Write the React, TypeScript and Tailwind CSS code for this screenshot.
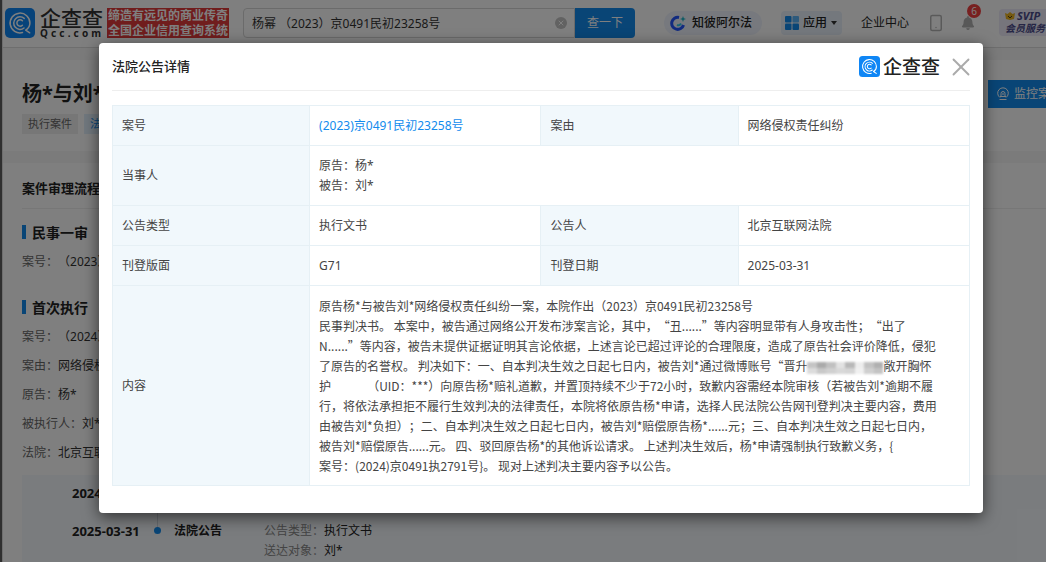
import { ReactNode, useState } from 'react';
import { FaBell } from 'react-icons/fa';
import { Smartphone, X } from 'lucide-react';

const judgment: ReactNode[] = [
  '原告杨*与被告刘*网络侵权责任纠纷一案，本院作出（2023）京0491民初23258号',
  '民事判决书。 本案中，被告通过网络公开发布涉案言论，其中，“丑......”等内容明显带有人身攻击性；“出了',
  'N......”等内容，被告未提供证据证明其言论依据，上述言论已超过评论的合理限度，造成了原告社会评价降低，侵犯',
  <>了原告的名誉权。 判决如下：一、自本判决生效之日起七日内，被告刘*通过微博账号“晋升<Mosaic />敞开胸怀</>,
  <>护<span className="inline-block w-9" />（UID：***）向原告杨*赔礼道歉，并置顶持续不少于72小时，致歉内容需经本院审核（若被告刘*逾期不履</>,
  '行，将依法承担拒不履行生效判决的法律责任，本院将依原告杨*申请，选择人民法院公告网刊登判决主要内容，费用',
  '由被告刘*负担）；二、自本判决生效之日起七日内，被告刘*赔偿原告杨*......元；三、自本判决生效之日起七日内，',
  '被告刘*赔偿原告......元。 四、驳回原告杨*的其他诉讼请求。 上述判决生效后，杨*申请强制执行致歉义务，{',
  '案号：(2024)京0491执2791号}。 现对上述判决主要内容予以公告。',
];

const execution = [
  ['案号：', '（2024）京0491执2791号'],
  ['案由：', '网络侵权责任纠纷'],
  ['原告：', '杨*'],
  ['被执行人：', '刘*'],
  ['法院：', '北京互联网法院'],
];

function Mosaic() {
  return (
    <span className="inline-grid grid-cols-8 w-[76px] h-3 align-middle overflow-hidden blur-[1px]">
      <i className="bg-[#c4c4c4]" /><i className="bg-[#aaaaaa]" /><i className="bg-[#c0c0c0]" /><i className="bg-[#e2e2e2]" />
      <i className="bg-[#b8b8b8]" /><i className="bg-[#ededed]" /><i className="bg-[#c2c2c2]" /><i className="bg-[#b0b0b0]" />
      <i className="bg-[#dcdcdc]" /><i className="bg-[#c8c8c8]" /><i className="bg-[#d0d0d0]" /><i className="bg-[#d8d8d8]" />
      <i className="bg-[#d5d5d5]" /><i className="bg-[#f0f0f0]" /><i className="bg-[#cfcfcf]" /><i className="bg-[#c3c3c3]" />
    </span>
  );
}

function Logo({ className }: { className: string }) {
  return (
    <svg viewBox="0 0 30 30" className={className} fill="none" stroke="white" strokeLinecap="round">
      <rect width="30" height="30" rx="5" fill="#0f86f5" stroke="none" />
      <path d="M17.5 24.600A9.900 9.900 0 1 1 24.900 15c0 3.600-1.600 5.600-4.200 7.200l4 2.600" strokeWidth="1.500" strokeLinejoin="round" />
      <path d="M19 20A6.300 6.300 0 1 1 19.200 10.400" strokeWidth="1.500" />
      <path d="M17.400 17.300A3.200 3.200 0 1 1 17.400 12.800" strokeWidth="1.500" />
    </svg>
  );
}

function Header() {
  const [query, setQuery] = useState('杨幂 （2023）京0491民初23258号');

  return (
    <header className="flex items-center h-12 pl-0.5 pb-0.5 bg-white border-b border-[#dddddd] whitespace-nowrap">
      <a href="#" className="flex items-center shrink-0">
        <Logo className="size-[30px]" />
        <span className="flex flex-col ml-[5px] text-[#333]">
          <span className="text-[21px] leading-5 font-medium">企查查</span>
          <span className="flex justify-between w-[61px] text-[10px] leading-[10px] font-bold">
            <span>Q</span><span>c</span><span>c</span><span>.</span><span>c</span><span>o</span><span>m</span>
          </span>
        </span>
        <span className="ml-1 px-px w-[122px] bg-[#e03a3a] text-white text-[12px] leading-[15px] font-bold text-center">
          缔造有远见的商业传奇<br />全国企业信用查询系统
        </span>
      </a>

      {/* Search */}
      <form className="flex shrink-0 ml-3.5 w-[392px] h-[30px]" onSubmit={e => e.preventDefault()}>
        <div className="relative flex-1">
          <input
            type="text"
            aria-label="搜索"
            value={query}
            onChange={e => setQuery(e.target.value)}
            className="w-full h-full border border-[#d6d6d6] rounded-l-sm pl-2 pr-8 text-[12px] text-[#333] bg-white outline-none"
          />
          <button type="button" aria-label="清空" onClick={() => setQuery('')}
            className="absolute right-2 top-[9px] flex items-center justify-center size-3 rounded-full bg-[#c4c4c4] text-white">
            <X size={8} strokeWidth={3} />
          </button>
        </div>
        <button className="w-[60px] rounded-r-sm bg-[#128bed] text-white text-[12px]">查一下</button>
      </form>

      {/* Navigation */}
      <nav className="flex items-center shrink-0 ml-[29px] text-[12px] text-[#222]">
        <a href="#" className="flex items-center gap-1.5 w-[98px] h-6 pl-1.5 rounded-full bg-[#eef3fc] font-medium">
          <svg viewBox="0 0 16 16" className="size-4" fill="none">
            <path d="M13.500 10A6 6 0 1 1 9 2.500" stroke="#2456ff" strokeWidth="3" />
            <path d="M11 8.500A3 3 0 0 1 7 10" stroke="#35c8e8" strokeWidth="2" />
            <path d="M13 1l.8 2.200L16 4l-2.200.8L13 7l-.8-2.200L10 4l2.200-.8z" fill="#19b5c8" />
          </svg>
          知彼阿尔法
        </a>
        <button className="flex items-center gap-1 ml-[19px] w-[61px] h-6 pl-1 rounded-sm bg-[#e8f1fb] font-medium">
          <svg viewBox="0 0 14 14" className="size-3.5">
            <rect width="6.500" height="6.500" rx="1" fill="#128bed" />
            <rect x="7.500" width="6.500" height="6.500" rx="1" fill="#5cb5f8" />
            <rect y="7.500" width="6.500" height="6.500" rx="1" fill="#128bed" />
            <rect x="7.500" y="7.500" width="6.500" height="6.500" rx="1" fill="#128bed" />
          </svg>
          应用
          <svg viewBox="0 0 6 4" className="w-1.5 h-1"><path d="M0 0h6L3 4z" fill="#333" /></svg>
        </button>
        <a href="#" className="ml-[19px] w-[50px]">企业中心</a>
        <Smartphone className="ml-4 text-[#b5b5b5]" size={18} strokeWidth={2} />
        <button aria-label="消息" className="relative ml-4 text-[#b0b0b0]">
          <FaBell size={14} />
          <span className="absolute left-1.5 -top-3 size-3.5 rounded-full bg-[#f04040] text-white text-[10px] leading-[14px] text-center">6</span>
        </button>
        <a href="#" className="ml-6 w-16 h-[27px] pl-1.5 rounded bg-[#eceaf8] text-[11px] leading-[13px] font-bold italic text-[#4a4a8a]">
          <span className="flex items-center gap-0.5">
            <svg viewBox="0 0 10 8" className="w-2.5 h-2"><path d="M0 1l2.500 1L5 0l2.500 2L10 1 9 7 5 8 1 7z" fill="#e8b020" /><path d="M3 4l2 2 2-2" stroke="#4a3a10" fill="none" /></svg>
            SVIP
          </span>
          <span className="block text-[10px]">会员服务</span>
        </a>
      </nav>
    </header>
  );
}

function StageTitle({ children }: { children: ReactNode }) {
  return (
    <h3 className="flex items-center gap-1.5 h-[30px] text-[14px] font-bold text-[#222]">
      <span className="w-1 h-3.5 bg-[#128bed]" />{children}
    </h3>
  );
}

function Field({ label, value }: { label: string; value: string }) {
  return <p className="h-[29px] text-[12px] leading-[29px] text-[#333] whitespace-nowrap"><span className="text-[#666]">{label}</span>{value}</p>;
}

function CasePage() {
  return (
    <main>
      <section className="mt-3 h-[91px] pl-[19px] pt-5 bg-white flex justify-between">
        <div>
          <h1 className="text-[20px] leading-7 font-bold text-[#222]">杨*与刘*</h1>
          <div className="flex gap-1.5 mt-1.5 text-[11px] leading-5">
            <span className="px-1.5 bg-[#eeeeee] text-[#666]">执行案件</span>
            <span className="px-1.5 bg-[#e2f1fd] text-[#128bed]">法院公告</span>
          </div>
        </div>
        <button className="flex items-center gap-1 w-[58px] h-[28px] pl-2 bg-[#128bed] text-white text-[12px] whitespace-nowrap overflow-hidden">
          <svg viewBox="0 0 14 14" className="size-3.5 shrink-0" fill="none" stroke="currentColor">
            <path d="M4 10.500a5.300 5.300 0 1 1 6 0M5 9V6.500a2 2 0 0 1 4 0V9M4 9.500h6M3.500 12.500h7M7 6v2" />
          </svg>
          监控案件
        </button>
      </section>

      <section className="mt-3 pl-[19px] pt-3 bg-white">
        <h2 className="h-[34px] leading-[26px] text-[13px] font-bold text-[#222] border-b border-[#eeeeee]">案件审理流程</h2>
        <div className="mt-2">
          <StageTitle>民事一审</StageTitle>
          <Field label="案号：" value="（2023）京0491民初23258号" />
        </div>
        <div className="mt-4">
          <StageTitle>首次执行</StageTitle>
          {execution.map(([label, value]) => <Field key={label} label={label} value={value} />)}
        </div>

        {/* Timeline */}
        <div className="mt-2 pt-2 bg-[#f5f9fd] text-[12px] leading-5 text-[#222]">
          <div className="grid grid-cols-[50px_72px_26px_88px_1fr] h-[38px]">
            <time className="col-start-2 text-[13px] font-bold">2024-09-13</time>
            <span className="flex justify-center"><i className="w-px bg-[#d0d8e0]" /></span>
            <b>立案</b>
          </div>
          <div className="grid grid-cols-[50px_72px_26px_88px_1fr] pb-10">
            <time className="col-start-2 text-[13px] font-bold">2025-03-31</time>
            <span className="flex flex-col items-center">
              <i className="w-px h-1.5 bg-[#d0d8e0]" /><i className="size-[7px] rounded-full bg-[#128bed]" />
            </span>
            <b className="pl-1">法院公告</b>
            <div className="pl-1.5">
              <p><span className="text-[#888]">公告类型：</span>执行文书</p>
              <p><span className="text-[#888]">送达对象：</span>刘*</p>
            </div>
          </div>
        </div>
      </section>
    </main>
  );
}

const cell = 'border border-[#e6f0f5] px-[9px] pt-2.5 pb-[9px] leading-5';

function Th({ children }: { children: ReactNode }) {
  return <th scope="row" className={`${cell} bg-[#f1f8fc] text-left font-normal`}>{children}</th>;
}

function NoticeDialog({ onClose }: { onClose: () => void }) {
  return (
    <div role="dialog" aria-labelledby="notice-title" className="flex-1 px-[13px] pb-[27px] rounded bg-white shadow-[0_4px_16px_rgba(0,0,0,0.6)]">
      <div className="flex items-center h-12 border-b border-[#eeeeee]">
        <h2 id="notice-title" className="flex-1 text-[13px] font-medium text-[#222]">法院公告详情</h2>
        <Logo className="size-[21px]" />
        <span className="ml-[3px] text-[19px] leading-6 font-medium text-[#222]">企查查</span>
        <button aria-label="关闭" onClick={onClose} className="ml-1.5 -mr-1.5 text-[#aaa]"><X size={30} strokeWidth={1.5} /></button>
      </div>
      <table className="w-full mt-3.5 table-fixed border-collapse text-[12px] text-[#444]">
        <colgroup>
          <col className="w-[23%]" /><col className="w-[27%]" /><col className="w-[23%]" /><col className="w-[27%]" />
        </colgroup>
        <tbody>
          <tr>
            <Th>案号</Th>
            <td className={cell}><a href="#" className="text-[#128bed]">(2023)京0491民初23258号</a></td>
            <Th>案由</Th>
            <td className={cell}>网络侵权责任纠纷</td>
          </tr>
          <tr>
            <Th>当事人</Th>
            <td colSpan={3} className={cell}>原告：杨*<br />被告：刘*</td>
          </tr>
          <tr>
            <Th>公告类型</Th>
            <td className={cell}>执行文书</td>
            <Th>公告人</Th>
            <td className={cell}>北京互联网法院</td>
          </tr>
          <tr>
            <Th>刊登版面</Th>
            <td className={cell}>G71</td>
            <Th>刊登日期</Th>
            <td className={cell}>2025-03-31</td>
          </tr>
          <tr>
            <Th>内容</Th>
            <td colSpan={3} className={`${cell} font-['Noto_Sans_CJK_SC',sans-serif]`}>
              {judgment.map((line, i) => <span key={i} className="block h-5 whitespace-nowrap">{line}</span>)}
            </td>
          </tr>
        </tbody>
      </table>
    </div>
  );
}

export default function App() {
  const [open, setOpen] = useState(true);

  return (
    <div lang="zh-CN" className="relative flex h-screen overflow-hidden bg-[#f7f7f7] font-['Noto_Sans','Noto_Sans_CJK_SC',sans-serif] [text-spacing-trim:space-all]">
      <div className="w-0.5 shrink-0 bg-[#5e5e5e]" />
      <div className="flex-1 min-w-0 border-l border-[#dddddd]">
        <Header />
        <CasePage />
      </div>
      {open && (
        <div className="absolute inset-0 flex items-start pt-[43px] pl-[99px] pr-[63px] bg-black/50">
          <NoticeDialog onClose={() => setOpen(false)} />
        </div>
      )}
    </div>
  );
}
